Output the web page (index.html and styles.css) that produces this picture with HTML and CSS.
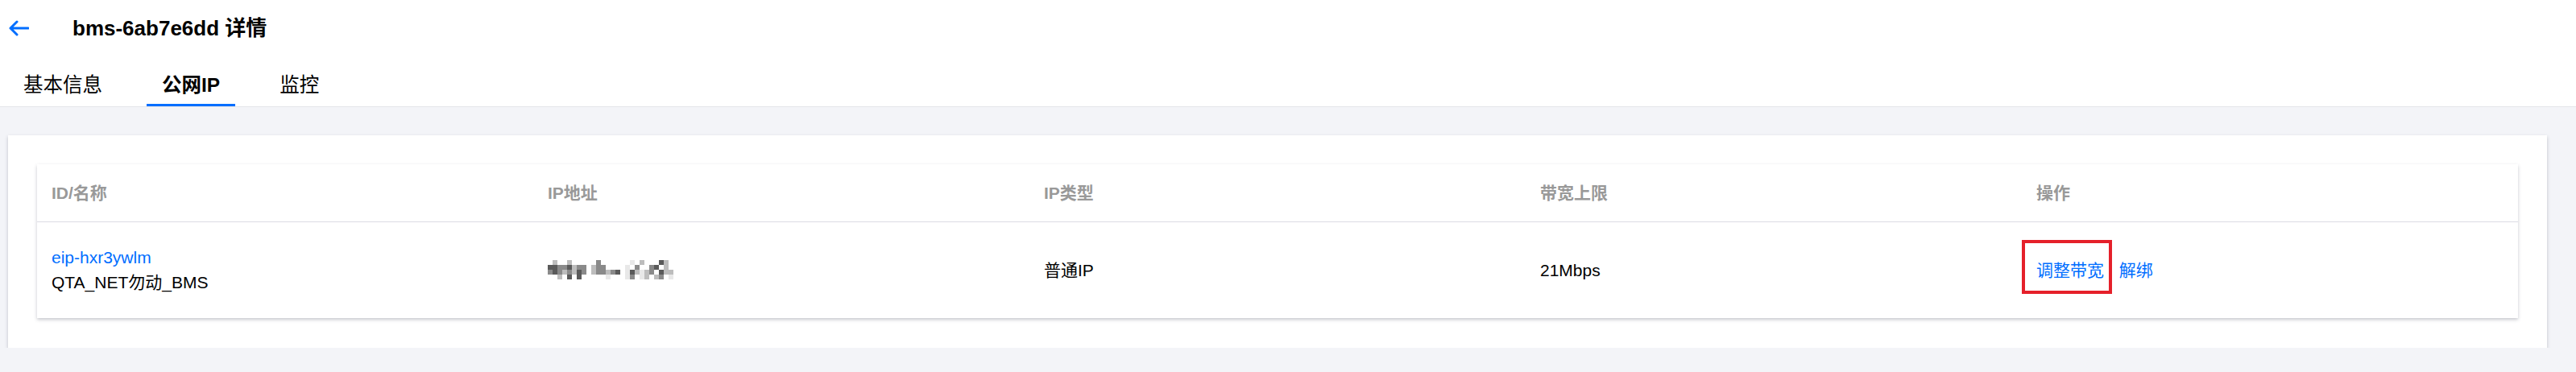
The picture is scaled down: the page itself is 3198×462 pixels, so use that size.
FILE: index.html
```html
<!DOCTYPE html>
<html lang="zh-CN">
<head>
    <meta charset="UTF-8">
    <title>bms-6ab7e6dd 详情</title>
    <link rel="stylesheet" href="styles.css">
</head>
<body>

    <div class="page-header">
        <div class="title-row">
            <a class="back" href="#">
                <svg width="26" height="20" viewBox="0 0 26 20">
                    <path d="M11 2 L3 10 L11 18 M3 10 H25" fill="none" stroke="#006eff" stroke-width="3" stroke-linecap="round" stroke-linejoin="round"/>
                </svg>
            </a>
            <h1 class="title">bms-6ab7e6dd 详情</h1>
        </div>
        <div class="tabs">
            <a class="tab" href="#">基本信息</a>
            <a class="tab active" href="#">公网IP</a>
            <a class="tab" href="#">监控</a>
        </div>
    </div>

    <div class="main">
        <div class="card">
            <div class="table-panel">
                <table class="eip-table">
                    <thead>
                        <tr>
                            <th>ID/名称</th>
                            <th>IP地址</th>
                            <th>IP类型</th>
                            <th>带宽上限</th>
                            <th>操作</th>
                        </tr>
                    </thead>
                    <tbody>
                        <tr>
                            <td>
                                <a class="link" href="#">eip-hxr3ywlm</a>
                                <div>QTA_NET勿动_BMS</div>
                            </td>
                            <td>
                                <!-- address is mosaicked in the screenshot -->
                                <svg class="masked" width="156" height="24" viewBox="0 0 156 24">
                                    <g fill="#bdbdbd">
                                        <rect x="6" y="0" width="6" height="6"/><rect x="24" y="0" width="6" height="6"/>
                                        <rect x="114" y="0" width="6" height="6"/><rect x="144" y="0" width="6" height="6"/>
                                        <rect x="30" y="6" width="6" height="6"/><rect x="54" y="6" width="6" height="6"/>
                                        <rect x="144" y="6" width="6" height="6"/>
                                        <rect x="18" y="12" width="6" height="6"/><rect x="30" y="12" width="6" height="6"/>
                                        <rect x="54" y="12" width="6" height="6"/><rect x="72" y="12" width="6" height="6"/>
                                        <rect x="108" y="12" width="6" height="6"/><rect x="120" y="12" width="6" height="6"/>
                                        <rect x="144" y="12" width="6" height="6"/><rect x="150" y="12" width="6" height="6"/>
                                        <rect x="12" y="18" width="6" height="6"/><rect x="120" y="18" width="6" height="6"/>
                                        <rect x="132" y="18" width="6" height="6"/>
                                    </g>
                                    <g fill="#8a8a8a">
                                        <rect x="60" y="0" width="6" height="6"/>
                                        <rect x="12" y="6" width="6" height="6"/><rect x="18" y="6" width="6" height="6"/>
                                        <rect x="36" y="6" width="6" height="6"/><rect x="42" y="6" width="6" height="6"/>
                                        <rect x="60" y="6" width="6" height="6"/><rect x="66" y="6" width="6" height="6"/>
                                        <rect x="108" y="6" width="6" height="6"/><rect x="126" y="6" width="6" height="6"/>
                                        <rect x="0" y="12" width="6" height="6"/><rect x="12" y="12" width="6" height="6"/>
                                        <rect x="24" y="12" width="6" height="6"/><rect x="42" y="12" width="6" height="6"/>
                                        <rect x="60" y="12" width="6" height="6"/><rect x="66" y="12" width="6" height="6"/>
                                        <rect x="78" y="12" width="6" height="6"/><rect x="126" y="12" width="6" height="6"/>
                                        <rect x="102" y="18" width="6" height="6"/><rect x="138" y="18" width="6" height="6"/>
                                    </g>
                                    <g fill="#5a5a5a">
                                        <rect x="138" y="0" width="6" height="6"/>
                                        <rect x="0" y="6" width="6" height="6"/><rect x="6" y="6" width="6" height="6"/>
                                        <rect x="24" y="6" width="6" height="6"/><rect x="132" y="6" width="6" height="6"/>
                                        <rect x="6" y="12" width="6" height="6"/><rect x="36" y="12" width="6" height="6"/>
                                        <rect x="84" y="12" width="6" height="6"/><rect x="102" y="12" width="6" height="6"/>
                                        <rect x="138" y="12" width="6" height="6"/>
                                        <rect x="24" y="18" width="6" height="6"/><rect x="36" y="18" width="6" height="6"/>
                                    </g>
                                    <g fill="#e8e8e8">
                                        <rect x="102" y="0" width="6" height="6"/><rect x="96" y="6" width="6" height="6"/>
                                        <rect x="96" y="12" width="6" height="6"/><rect x="114" y="12" width="6" height="6"/>
                                        <rect x="72" y="18" width="6" height="6"/><rect x="96" y="18" width="6" height="6"/>
                                        <rect x="114" y="18" width="6" height="6"/><rect x="150" y="18" width="6" height="6"/>
                                    </g>
                                </svg>
                            </td>
                            <td>普通IP</td>
                            <td>21Mbps</td>
                            <td>
                                <a class="link marked" href="#">调整带宽</a>
                                <a class="link" href="#">解绑</a>
                            </td>
                        </tr>
                    </tbody>
                </table>
            </div>
        </div>
    </div>

</body>
</html>
```

FILE: styles.css
```css
/* Base */
body {
    margin: 0;
    font-family: 'Liberation Sans', 'Noto Sans CJK SC', sans-serif;
    background-color: #f3f4f8;
    color: #000;
}

a {
    text-decoration: none;
}

/* Header with title and tabs */
.page-header {
    background-color: #fff;
    border-bottom: 1px solid #e4e5ea;
}

.title-row {
    display: flex;
    align-items: center;
    padding: 17px 0 0 10px;
    height: 36px;
    margin-bottom: 35px;
}

.back {
    display: flex;
    width: 26px;
    height: 20px;
    margin-right: 54px;
}

.title {
    margin: 0;
    font-size: 26px;
    line-height: 36px;
    font-weight: 700;
    color: #000;
}

.tabs {
    display: flex;
    gap: 36px;
    padding-left: 10px;
}

.tab {
    padding: 0 19px 5px;
    font-size: 24.5px;
    line-height: 36px;
    color: #000;
    border-bottom: 3px solid transparent;
}

.tab.active {
    font-weight: 700;
    border-bottom-color: #006eff;
}

/* Content */
.main {
    padding: 35px 36px 0 10px;
}

.card {
    background-color: #fff;
    padding: 36px 36px 37px;
    box-shadow: 0 2px 4px rgba(54, 58, 80, 0.28);
}

.table-panel {
    background-color: #fff;
    box-shadow: 0 2px 4px rgba(54, 58, 80, 0.28);
}

.eip-table {
    width: 100%;
    table-layout: fixed;
    border-collapse: collapse;
    font-size: 21px;
}

.eip-table th {
    text-align: left;
    font-weight: 700;
    color: #999;
    line-height: 31px;
    padding: 20px 18px;
    border-bottom: 1px solid #dcdbe3;
}

.eip-table td {
    vertical-align: middle;
    line-height: 31px;
    padding: 28px 18px 29px;
    color: #000;
}

.link {
    color: #006eff;
}

.masked {
    display: block;
}

.marked {
    position: relative;
    display: inline-block;
    margin-right: 13px;
}

/* red annotation frame from the screenshot */
.marked::after {
    content: '';
    position: absolute;
    left: -18px;
    right: -10px;
    top: -22px;
    bottom: -14px;
    border: 4px solid #e5202a;
}
```
